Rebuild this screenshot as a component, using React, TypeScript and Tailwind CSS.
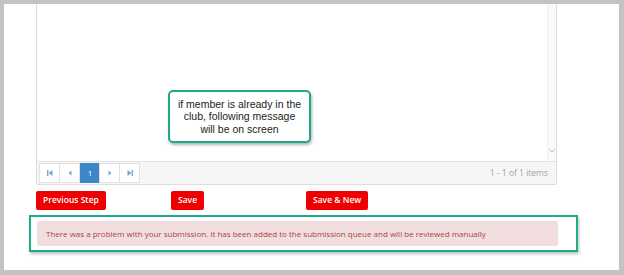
import React from "react";

const PagerIcon: React.FC<{ kind: "first" | "prev" | "next" | "last" }> = ({ kind }) => {
  return (
    <svg width="8" height="8" viewBox="0 0 8 8" className="fill-[#6fa7d8]">
      {kind === "first" && (
        <>
          <rect x="1" y="1" width="1.4" height="6" />
          <polygon points="6.5,1 2.6,4 6.5,7" />
        </>
      )}
      {kind === "prev" && <polygon points="5.5,1.5 2.5,4 5.5,6.5" />}
      {kind === "next" && <polygon points="2.5,1.5 5.5,4 2.5,6.5" />}
      {kind === "last" && (
        <>
          <rect x="5.6" y="1" width="1.4" height="6" />
          <polygon points="1.5,1 5.4,4 1.5,7" />
        </>
      )}
    </svg>
  );
};

const buttons = ["Previous Step", "Save", "Save & New"];

const App: React.FC = () => {
  return (
    <div className="h-[275px] w-[624px] overflow-hidden bg-[#c3c3c3] pt-[4px] pl-[4px] pr-[5px] pb-[5px]">
      <div className="flex h-full w-full flex-col bg-white">
        {/* Grid */}

        <div className="relative ml-[32px] w-[521px] rounded-b-[3px] border-x border-b border-[#dcdcdc]">
          <div className="flex h-[157px]">
            <div className="flex-1" />
            <div className="flex w-[9px] flex-col justify-end border-l border-[#f0f0f0] bg-[#fafafa] pb-[8px]">
              <svg width="8" height="5" viewBox="0 0 8 5" className="stroke-[#b5b5b5]" fill="none">
                <polyline points="1,1 4,4 7,1" strokeWidth="1" />
              </svg>
            </div>
          </div>

          <div className="flex h-[23px] items-center justify-between border-t border-[#e3e3e3] bg-[#f6f6f6] pl-[2px] pr-[8px]">
            <div className="flex">
              {(["first", "prev"] as const).map((k) => (
                <div
                  key={k}
                  className="-ml-px flex h-[20px] w-[21px] items-center justify-center border border-[#e2e2e2] bg-white first:ml-0"
                >
                  <PagerIcon kind={k} />
                </div>
              ))}
              <div className="flex h-[20px] w-[20px] items-center justify-center bg-[#3d87c9] font-['Open_Sans'] text-[8px] text-white">
                1
              </div>
              {(["next", "last"] as const).map((k) => (
                <div
                  key={k}
                  className="-ml-px flex h-[20px] w-[21px] items-center justify-center border border-[#e2e2e2] bg-white first:ml-0"
                >
                  <PagerIcon kind={k} />
                </div>
              ))}
            </div>
            <span className="font-['Open_Sans'] text-[8.5px] text-[#a3a3a3]">1 - 1 of 1 items</span>
          </div>

          {/* Annotation callout */}

          <div className="absolute left-[131px] top-[86px] flex h-[53px] w-[143px] items-center justify-center rounded-[5px] border-2 border-[#1fa98a] bg-white shadow-[1px_2px_3px_rgba(0,0,0,0.3)]">
            <p className="font-['Liberation_Sans',Arial,sans-serif] text-center text-[10.5px] leading-[12.5px] text-[#222]">
              if member is already in the
              <br />
              club, following message
              <br />
              will be on screen
            </p>
          </div>
        </div>

        {/* Buttons */}

        <div className="ml-[32px] mt-[6px] grid grid-cols-[135px_135px_135px]">
          {buttons.map((label) => (
            <div key={label} className="flex">
              <button className="flex h-[19px] items-center rounded-[2px] bg-[#ee0000] px-[7px] font-['Open_Sans'] text-[8.5px] font-semibold leading-none text-white">
                {label}
              </button>
            </div>
          ))}
        </div>

        {/* Error message */}

        <div className="ml-[25px] mt-[5px] w-[549px] border-2 border-[#22aa8c] bg-white pl-[6px] pt-[4px] pb-[4px] shadow-[1px_2px_3px_rgba(0,0,0,0.25)]">
          <div className="flex h-[25px] w-[521px] items-center rounded-[2px] bg-[#f2dede] pl-[9px]">
            <span className="font-['Open_Sans'] text-[8px] text-[#a94442]">
              There was a problem with your submission. It has been added to the submission queue and will be reviewed manually
            </span>
          </div>
        </div>
      </div>
    </div>
  );
};

export default App;
